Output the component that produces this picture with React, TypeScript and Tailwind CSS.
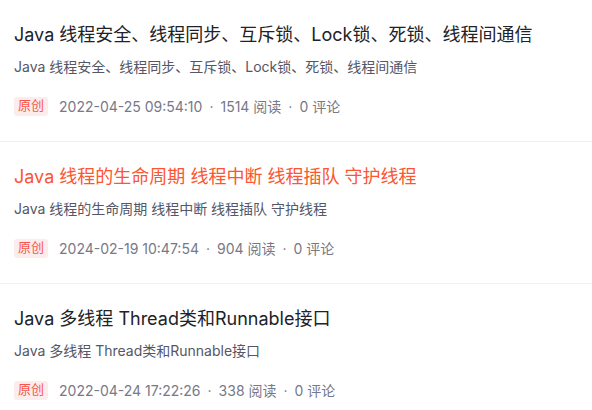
import React from 'react';

type Post = {
  title: string;
  desc: string;
  date: string;
  views: number;
  comments: number;
  active?: boolean;
};

const POSTS: Post[] = [
  {
    title: 'Java 线程安全、线程同步、互斥锁、Lock锁、死锁、线程间通信',
    desc: 'Java 线程安全、线程同步、互斥锁、Lock锁、死锁、线程间通信',
    date: '2022-04-25 09:54:10',
    views: 1514,
    comments: 0,
  },
  {
    title: 'Java 线程的生命周期 线程中断 线程插队 守护线程',
    desc: 'Java 线程的生命周期 线程中断 线程插队 守护线程',
    date: '2024-02-19 10:47:54',
    views: 904,
    comments: 0,
    active: true,
  },
  {
    title: 'Java 多线程 Thread类和Runnable接口',
    desc: 'Java 多线程 Thread类和Runnable接口',
    date: '2022-04-24 17:22:26',
    views: 338,
    comments: 0,
  },
];

const App: React.FC = () => {
  return (
    <div className="w-[592px] h-[410px] overflow-hidden bg-white font-['Inter','Noto_Sans_CJK_SC',sans-serif]">
      {POSTS.map((p, i) => (
        <div key={i} className="px-[14px] pt-[23px] pb-[25px] border-b border-[#f0f0f2]">
          <div
            className={`text-[18px] leading-6 font-normal whitespace-nowrap ${
              p.active ? 'text-[#fc5531]' : 'text-[#222226]'
            }`}
          >
            {p.title}
          </div>
          <div className="mt-[10px] text-[14px] leading-5 text-[#555666] whitespace-nowrap">{p.desc}</div>
          <div className="mt-[19px] h-5 flex items-center text-[14px] text-[#777888] whitespace-nowrap">
            <span className="h-[19px] px-[4px] flex items-center rounded-[3px] bg-[#fdecec] text-[13px] text-[#f5574c]">
              原创
            </span>
            <span className="ml-[11px]">{p.date}</span>
            <span className="mx-[7px]">·</span>
            <span>{p.views} 阅读</span>
            <span className="mx-[7px]">·</span>
            <span>{p.comments} 评论</span>
          </div>
        </div>
      ))}
    </div>
  );
};

export default App;
